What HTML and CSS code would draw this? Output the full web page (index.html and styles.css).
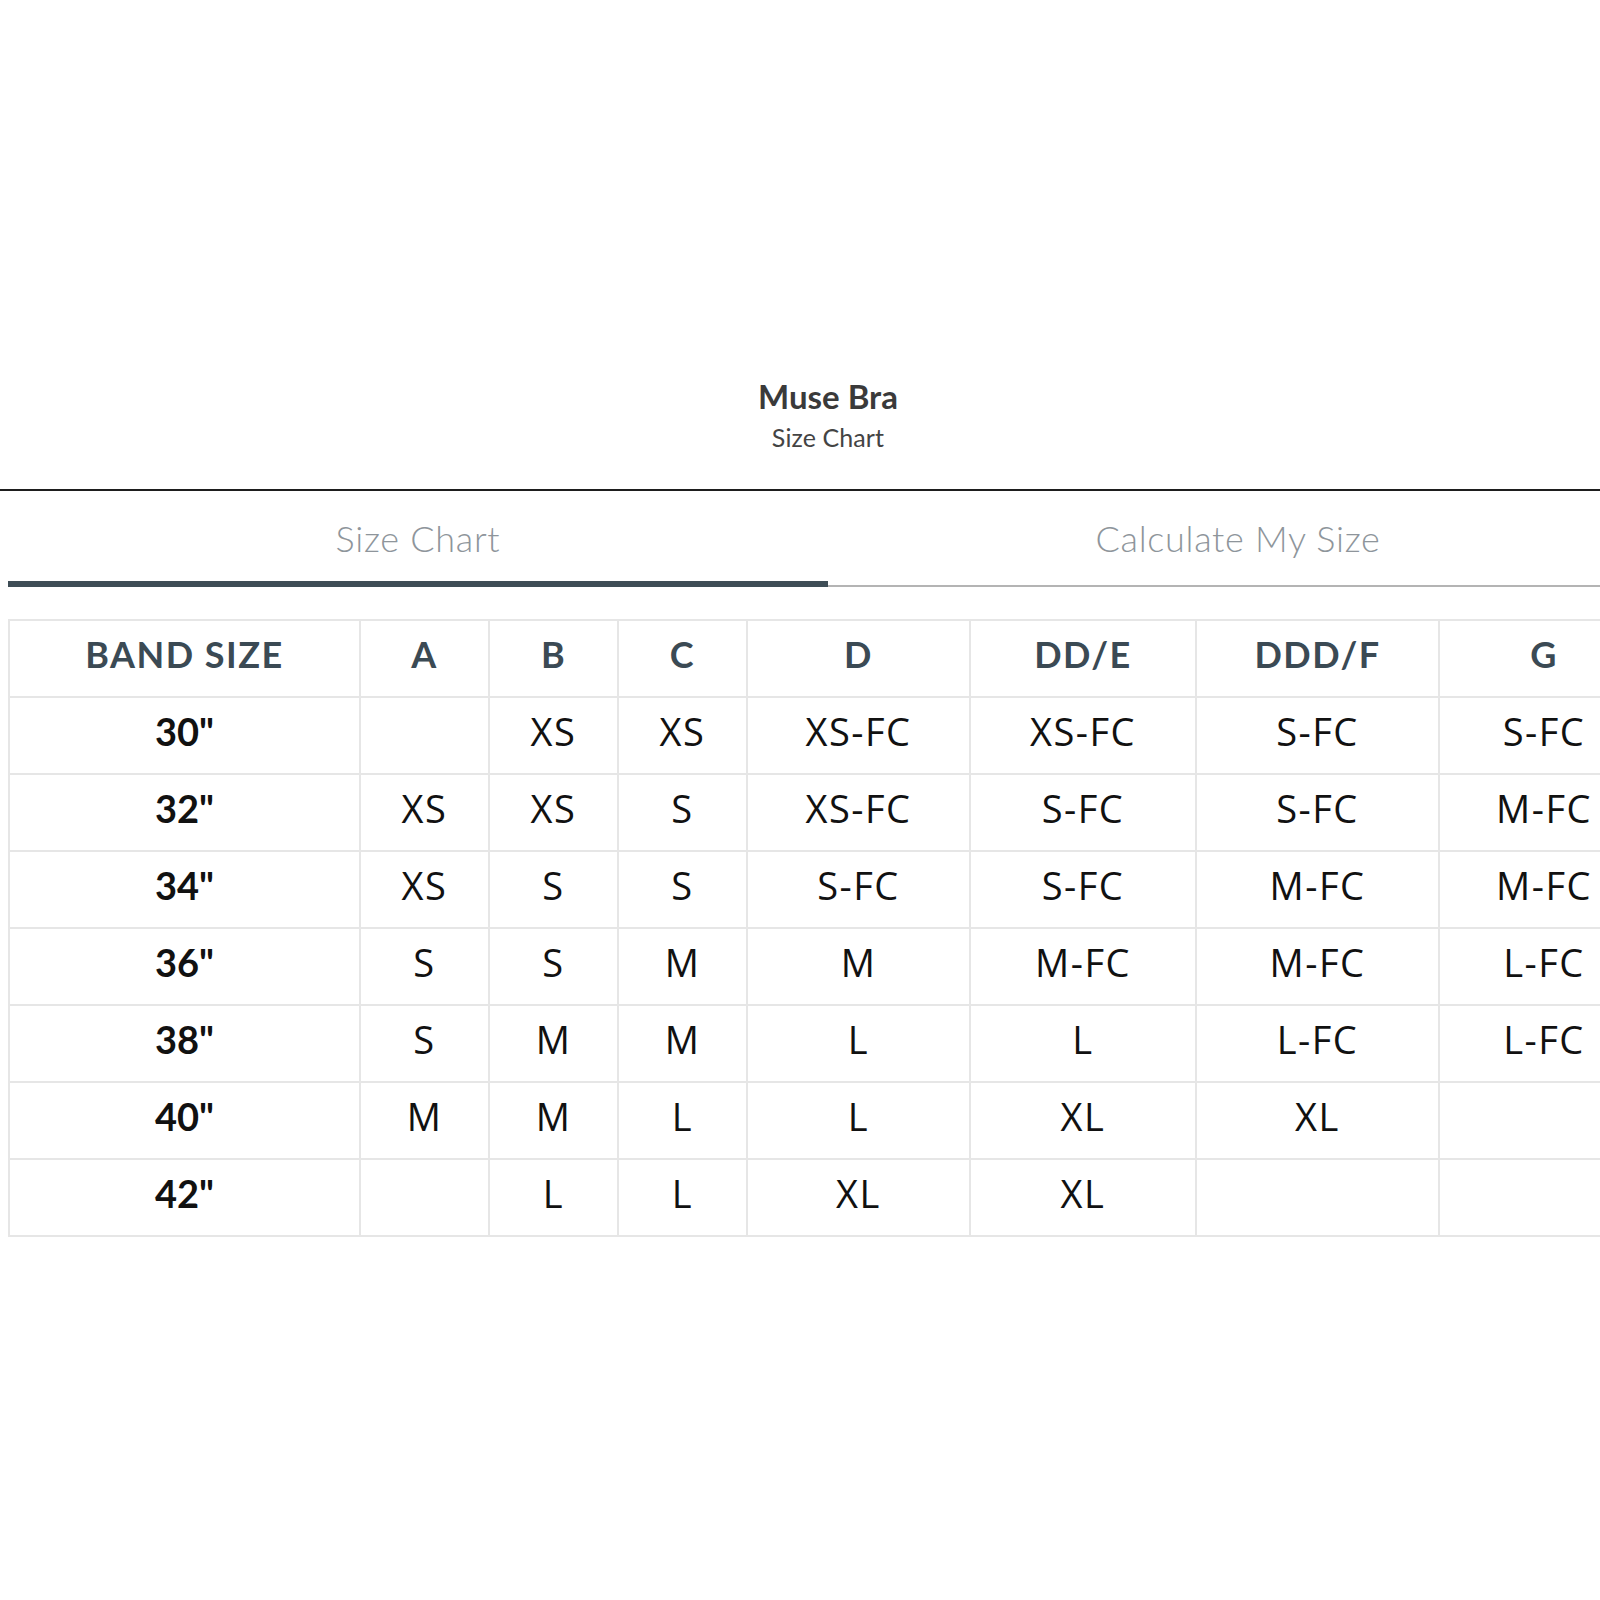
FILE: index.html
```html
<!DOCTYPE html>
<html lang="en">
<head>
<meta charset="utf-8">
<title>Muse Bra Size Chart</title>
<link rel="stylesheet" href="styles.css">
</head>
<body>
<div class="page">
  <header class="heading">
    <h1 class="heading-title">Muse Bra</h1>
    <p class="heading-sub">Size Chart</p>
  </header>
</div>
<div class="rule"></div>
<div class="page">
  <nav class="tabs">
    <div class="tab tab-active">Size Chart</div>
    <div class="tab">Calculate My Size</div>
  </nav>
  <table class="chart">
    <colgroup>
      <col class="col-band">
      <col class="col-a">
      <col class="col-b">
      <col class="col-c">
      <col class="col-d">
      <col class="col-dd">
      <col class="col-ddd">
      <col class="col-g">
    </colgroup>
    <thead>
      <tr class="row">
        <th class="head">BAND SIZE</th>
        <th class="head">A</th>
        <th class="head">B</th>
        <th class="head">C</th>
        <th class="head">D</th>
        <th class="head">DD/E</th>
        <th class="head">DDD/F</th>
        <th class="head">G</th>
      </tr>
    </thead>
    <tbody>
      <tr class="row">
        <td class="band">30"</td><td class="cell"></td><td class="cell">XS</td><td class="cell">XS</td><td class="cell">XS-FC</td><td class="cell">XS-FC</td><td class="cell">S-FC</td><td class="cell">S-FC</td>
      </tr>
      <tr class="row">
        <td class="band">32"</td><td class="cell">XS</td><td class="cell">XS</td><td class="cell">S</td><td class="cell">XS-FC</td><td class="cell">S-FC</td><td class="cell">S-FC</td><td class="cell">M-FC</td>
      </tr>
      <tr class="row">
        <td class="band">34"</td><td class="cell">XS</td><td class="cell">S</td><td class="cell">S</td><td class="cell">S-FC</td><td class="cell">S-FC</td><td class="cell">M-FC</td><td class="cell">M-FC</td>
      </tr>
      <tr class="row">
        <td class="band">36"</td><td class="cell">S</td><td class="cell">S</td><td class="cell">M</td><td class="cell">M</td><td class="cell">M-FC</td><td class="cell">M-FC</td><td class="cell">L-FC</td>
      </tr>
      <tr class="row">
        <td class="band">38"</td><td class="cell">S</td><td class="cell">M</td><td class="cell">M</td><td class="cell">L</td><td class="cell">L</td><td class="cell">L-FC</td><td class="cell">L-FC</td>
      </tr>
      <tr class="row">
        <td class="band">40"</td><td class="cell">M</td><td class="cell">M</td><td class="cell">L</td><td class="cell">L</td><td class="cell">XL</td><td class="cell">XL</td><td class="cell"></td>
      </tr>
      <tr class="row">
        <td class="band">42"</td><td class="cell"></td><td class="cell">L</td><td class="cell">L</td><td class="cell">XL</td><td class="cell">XL</td><td class="cell"></td><td class="cell"></td>
      </tr>
    </tbody>
  </table>
</div>
</body>
</html>
```

FILE: styles.css
```css
html, body {
  margin: 0;
  padding: 0;
  background: #ffffff;
  overflow: hidden;
}

body {
  width: 1656px;
  font-family: "Lato", "Open Sans", sans-serif;
  color: #111111;
}

.page {
  width: 1640px;
  margin: 0 8px;
}

.heading {
  text-align: center;
  padding-top: 376px;
}

.heading-title {
  margin: 0;
  font-family: "Lato", sans-serif;
  font-weight: 700;
  font-size: 33px;
  line-height: 40px;
  color: #3a3a3a;
}

.heading-sub {
  margin: 6px 0 0;
  font-family: "Lato", sans-serif;
  font-weight: 400;
  font-size: 25px;
  line-height: 30px;
  color: #444444;
  letter-spacing: 0.1px;
}

.rule {
  height: 2px;
  margin-top: 37px;
  background: #1e1e1e;
  width: 1656px;
}

.tabs {
  display: flex;
}

.tab {
  flex: 1 1 0;
  text-align: center;
  font-family: "Lato", sans-serif;
  font-weight: 300;
  font-size: 36px;
  line-height: 44px;
  letter-spacing: 0.7px;
  color: #8e959b;
  padding: 25px 0 25px;
  border-bottom: 2px solid #b4b4b4;
}

.tab-active {
  padding-bottom: 21px;
  border-bottom: 6px solid #3e4d56;
}

.chart {
  margin-top: 32px;
  width: 1640px;
  table-layout: fixed;
  border-collapse: collapse;
  border: 2px solid #e6e6e6;
}

.col-band { width: 351px; }
.col-a { width: 129px; }
.col-b { width: 129px; }
.col-c { width: 129px; }
.col-d { width: 223px; }
.col-dd { width: 226px; }
.col-ddd { width: 243px; }
.col-g { width: 210px; }

.row {
  height: 77px;
}

.head,
.band,
.cell {
  border: 2px solid #e6e6e6;
  padding: 0 0 9px;
  text-align: center;
  vertical-align: middle;
}

.head {
  font-family: "Lato", sans-serif;
  font-weight: 700;
  font-size: 36px;
  color: #3b4a54;
  letter-spacing: 1.5px;
}

.band {
  font-family: "Lato", sans-serif;
  font-weight: 700;
  font-size: 38px;
  color: #111111;
}

.cell {
  font-family: "Open Sans", sans-serif;
  font-weight: 400;
  font-size: 38px;
  color: #111111;
  letter-spacing: 1.5px;
}
```
